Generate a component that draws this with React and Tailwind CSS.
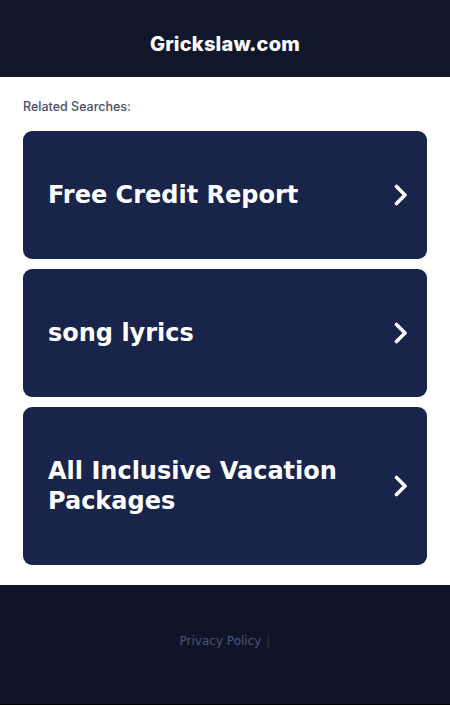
const SEARCHES = ["Free Credit Report", "song lyrics", "All Inclusive Vacation Packages"]

function Chevron() {
  return (
    <svg width="16" height="22" viewBox="0 0 16 22" fill="none" className="shrink-0">
      <path d="M3.5 2.5 12 11l-8.5 8.5" stroke="white" strokeWidth="3.6" strokeLinecap="round" strokeLinejoin="round" />
    </svg>
  )
}

export default function App() {
  return (
    <div className="flex min-h-[705px] flex-col bg-white">
      {/* header */}
      <header className="flex h-[77px] items-center justify-center bg-[#11172b] pt-[10px]">
        <h1 className="text-[20px] font-extrabold text-white [font-family:Inter,'Open_Sans',sans-serif] tracking-[0.2px]">
          Grickslaw.com
        </h1>
      </header>

      {/* related searches */}
      <main className="px-[23px] pt-[22px] pb-[20px]">
        <p className="mb-[16px] text-[12.5px] font-medium leading-[16px] text-[#4a5069] [font-family:Inter,sans-serif]">
          Related Searches:
        </p>
        <div className="flex flex-col gap-[10px]">
          {SEARCHES.map((s) => (
            <a
              key={s}
              href="#"
              className="flex items-center justify-between rounded-[9px] bg-[#19244a] py-[49px] pl-[25px] pr-[18px]"
            >
              <span className="pr-8 text-[24px] font-bold leading-[30px] text-white [font-family:'DejaVu_Sans',sans-serif]">
                {s}
              </span>
              <Chevron />
            </a>
          ))}
        </div>
      </main>

      {/* footer */}
      <footer className="flex flex-1 items-start justify-center border-b border-black bg-[#0f1529] pt-[47px]">
        <span className="text-[12px] text-[#4b5475] [font-family:'DejaVu_Sans',sans-serif]">
          Privacy Policy
          <span className="ml-[5px] text-[#2e354e]">|</span>
        </span>
      </footer>
    </div>
  )
}
